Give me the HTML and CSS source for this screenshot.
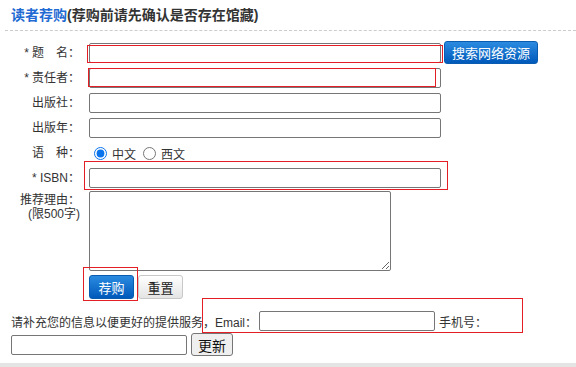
FILE: index.html
```html
<!DOCTYPE html>
<html lang="zh-CN">
<head>
    <meta charset="utf-8">
    <title>读者荐购</title>
    <link rel="stylesheet" href="styles.css">
</head>
<body>
<div class="page">
    <h3 class="title"><span class="title-main">读者荐购</span>(荐购前请先确认是否存在馆藏)</h3>

    <form class="recommend-form">
        <div class="row">
            <label class="label"><span class="req">*</span>题　名：</label>
            <input type="text" class="field">
            <button type="button" class="btn-search">搜索网络资源</button>
        </div>
        <div class="row">
            <label class="label"><span class="req">*</span>责任者：</label>
            <input type="text" class="field">
        </div>
        <div class="row">
            <label class="label">出版社：</label>
            <input type="text" class="field">
        </div>
        <div class="row">
            <label class="label">出版年：</label>
            <input type="text" class="field">
        </div>
        <div class="row">
            <label class="label">语　种：</label>
            <div class="radios">
                <input type="radio" name="lang" id="lang-zh" checked><label for="lang-zh">中文</label>
                <input type="radio" name="lang" id="lang-en"><label for="lang-en">西文</label>
            </div>
        </div>
        <div class="row">
            <label class="label">* ISBN：</label>
            <input type="text" class="field">
        </div>
        <div class="row row-text">
            <label class="label label-top">推荐理由：<br>(限500字)</label>
            <textarea class="reason"></textarea>
        </div>
        <div class="row-actions">
            <button type="submit" class="btn-primary">荐购</button>
            <button type="reset" class="btn-light">重置</button>
        </div>
    </form>

    <div class="info">
        <div class="info-line">
            <span>请补充您的信息以便更好的提供服务，Email：</span>
            <input type="text" class="small-field email">
            <span>手机号：</span>
        </div>
        <div class="info-line">
            <input type="text" class="small-field">
            <button type="button" class="btn-default">更新</button>
        </div>
    </div>

    <div class="footer-bar"></div>

    <!-- marks drawn over the form -->
    <div class="mark mark-title"></div>
    <div class="mark mark-author"></div>
    <div class="mark mark-isbn"></div>
    <div class="mark mark-submit"></div>
    <div class="mark mark-contact"></div>
</div>
</body>
</html>
```

FILE: styles.css
```css
body {
    margin: 0;
    padding: 0;
    background: #fff;
    color: #333;
    font-family: "Liberation Sans", "Noto Sans CJK SC", sans-serif;
    font-size: 12px;
}

.page {
    position: relative;
    width: 576px;
    height: 367px;
    overflow: hidden;
}

.title {
    margin: 0 0 0 5px;
    padding: 6px 0 0 6px;
    height: 24px;
    box-sizing: content-box;
    border-bottom: 1px dashed #ccc;
    font-size: 14px;
    line-height: 18px;
    font-weight: bold;
    color: #333;
}

.title-main {
    color: #1f6bd3;
}

.recommend-form {
    margin-top: 9px;
}

.row {
    display: flex;
    align-items: center;
    height: 25px;
}

.label {
    width: 80px;
    margin-right: 9px;
    text-align: right;
    line-height: 14px;
    color: #333;
    flex-shrink: 0;
}

.req {
    margin-right: 3px;
}

.field {
    width: 352px;
    height: 20px;
    box-sizing: border-box;
    margin: 0;
    border: 1px solid #767676;
    border-radius: 2px;
    padding: 1px 3px;
    font-size: 12px;
}

.btn-search {
    margin-left: 3px;
    width: 94px;
    height: 23px;
    border: 1px solid #0a5cb0;
    border-radius: 3px;
    background: linear-gradient(#2b8be0, #0059ba);
    color: #fff;
    font-family: inherit;
    font-size: 13px;
    padding: 0;
    cursor: pointer;
}

.radios {
    display: flex;
    align-items: center;
    padding-top: 1px;
}

.radios input {
    margin: 0 5px 0 5px;
    width: 13px;
    height: 13px;
    accent-color: #0a74ec;
}

.radios label {
    margin-right: 2px;
}

.row-text {
    height: auto;
    align-items: flex-start;
    padding: 1px 0;
}

.label-top {
    padding-top: 2px;
}

.reason {
    width: 302px;
    height: 80px;
    box-sizing: border-box;
    margin: 0;
    border: 1px solid #767676;
    border-radius: 2px;
    font-size: 12px;
}

.row-actions {
    display: flex;
    gap: 4px;
    padding: 3px 0 0 89px;
}

.btn-primary,
.btn-light {
    width: 45px;
    height: 24px;
    padding: 0;
    border-radius: 3px;
    font-family: inherit;
    font-size: 13px;
    cursor: pointer;
}

.btn-primary {
    border: 1px solid #0a5cb0;
    background: linear-gradient(#2b8be0, #0059ba);
    color: #fff;
}

.btn-light {
    border: 1px solid #c8c8c8;
    background: linear-gradient(#fff, #e4e4e4);
    color: #222;
}

.info {
    margin-top: 10px;
    padding-left: 11px;
    color: #333;
}

.info-line {
    display: flex;
    align-items: center;
    height: 24px;
}

.info-line + .info-line {
    height: 23px;
}

.small-field {
    width: 176px;
    height: 20px;
    box-sizing: border-box;
    margin: 0 4px 0 0;
    border: 1px solid #767676;
    border-radius: 2px;
}

.email {
    margin-left: 2px;
}

.btn-default {
    width: 42px;
    height: 23px;
    padding: 0;
    border: 1px solid #767676;
    border-radius: 3px;
    background: #efefef;
    color: #111;
    font-family: inherit;
    font-size: 14px;
}

.footer-bar {
    margin-top: 7px;
    height: 10px;
    background: #e4e4e4;
}

/* red marks */
.mark {
    position: absolute;
    box-sizing: border-box;
    border: 1px solid #e31e24;
    pointer-events: none;
}

.mark-title { left: 87px; top: 45px; width: 356px; height: 18px; }
.mark-author { left: 88px; top: 68px; width: 348px; height: 19px; }
.mark-isbn { left: 84px; top: 161px; width: 364px; height: 29px; }
.mark-submit { left: 83px; top: 267px; width: 55px; height: 34px; }
.mark-contact { left: 202px; top: 298px; width: 321px; height: 35px; }
```
